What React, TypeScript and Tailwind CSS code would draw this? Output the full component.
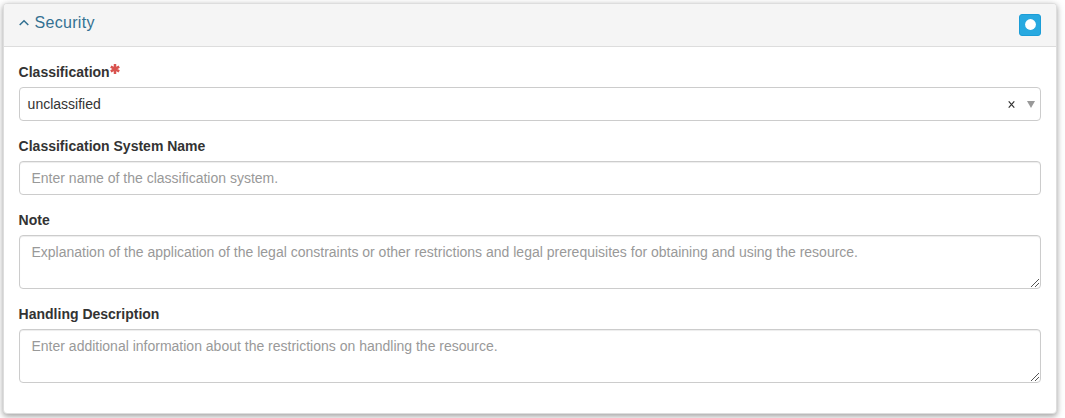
import type { ReactNode } from 'react';

function Field({ label, required, children }: { label: string; required?: boolean; children: ReactNode }) {
  return (
    <label className="mb-[15px] block">
      <span className="-ml-[0.4px] mb-[5px] flex h-5 items-center font-bold">
        {label}
        {required && (
          <svg className="mb-[7px] size-[10px] text-[#d9534f]" viewBox="0 0 10 10" stroke="currentColor" strokeWidth="2.5">
            <path d="M5 0v10M.8 2.6l8.4 4.8M9.2 2.6.8 7.4" />
          </svg>
        )}
      </span>
      {children}
    </label>
  );
}

const control =
  'block w-full rounded border border-[#ccc] bg-white pr-3 pl-[11.5px] py-1.5 leading-5 text-[#555] shadow-[inset_0_1px_1px_rgba(0,0,0,0.075)] outline-none placeholder:text-[#999]';

function TextArea({ placeholder }: { placeholder: string }) {
  return (
    <div className="relative">
      <textarea className={`${control} h-[54px] resize-none`} placeholder={placeholder} />
      <svg
        className="pointer-events-none absolute right-[2px] bottom-[2px] size-[8px]"
        viewBox="0 0 8 8"
        fill="none"
        stroke="#555"
        strokeWidth="1"
      >
        <path d="M0 8 8 0M4 8 8 4" />
      </svg>
    </div>
  );
}

export default function App() {
  return (
    <div className="h-[418px] overflow-hidden bg-white pt-[3px] pl-[3px] font-['Liberation_Sans',Arial,sans-serif] text-sm leading-5 text-[#333]">
      <section className="h-[411px] w-[1054px] rounded border border-[#ddd] bg-white shadow-[0_2px_5px_0_rgba(0,0,0,0.26),0_2px_10px_0_rgba(0,0,0,0.16)]">
        <header className="flex h-[43px] items-center justify-between rounded-t-[3px] border-b border-[#ddd] bg-[#f5f5f5] px-[15px]">
          <h2 className="mb-[5px] flex items-center text-base leading-5 tracking-[0.3px] text-[#337192]">
            <svg className="mr-[5.5px] h-[7px] w-[10px]" viewBox="0 0 10 7" fill="none" stroke="currentColor" strokeWidth="1.5">
              <path d="M.7 6 5 1.7 9.3 6" />
            </svg>
            Security
          </h2>
          <button aria-label="Toggle section" className="flex size-[22px] items-center justify-center rounded-[3px] border border-[#1b9dd7] bg-[#28a9e0]">
            <svg className="size-3" viewBox="0 0 12 12" fill="#fff">
              <circle cx="6.5" cy="5.5" r="5.4" />
            </svg>
          </button>
        </header>
        <div className="p-[15px]">
          <Field label="Classification" required>
            <div className="flex h-[34px] items-center rounded border border-[#ccc] pr-[5px] pl-[7.6px]">
              <span className="flex-1">unclassified</span>
              <svg className="mt-px mr-[12px] h-[7px] w-[7px]" viewBox="0 0 7 7" fill="none" stroke="#333" strokeWidth="1.1">
                <path d="M.7.3 6.3 6.7M6.3.3.7 6.7" />
              </svg>
              <svg className="h-[7px] w-2" viewBox="0 0 8 7" fill="#999">
                <path d="M0 0h8L4 7z" />
              </svg>
            </div>
          </Field>
          <Field label="Classification System Name">
            <input className={`${control} h-[34px]`} placeholder="Enter name of the classification system." />
          </Field>
          <Field label="Note">
            <TextArea placeholder="Explanation of the application of the legal constraints or other restrictions and legal prerequisites for obtaining and using the resource." />
          </Field>
          <Field label="Handling Description">
            <TextArea placeholder="Enter additional information about the restrictions on handling the resource." />
          </Field>
        </div>
      </section>
    </div>
  );
}
